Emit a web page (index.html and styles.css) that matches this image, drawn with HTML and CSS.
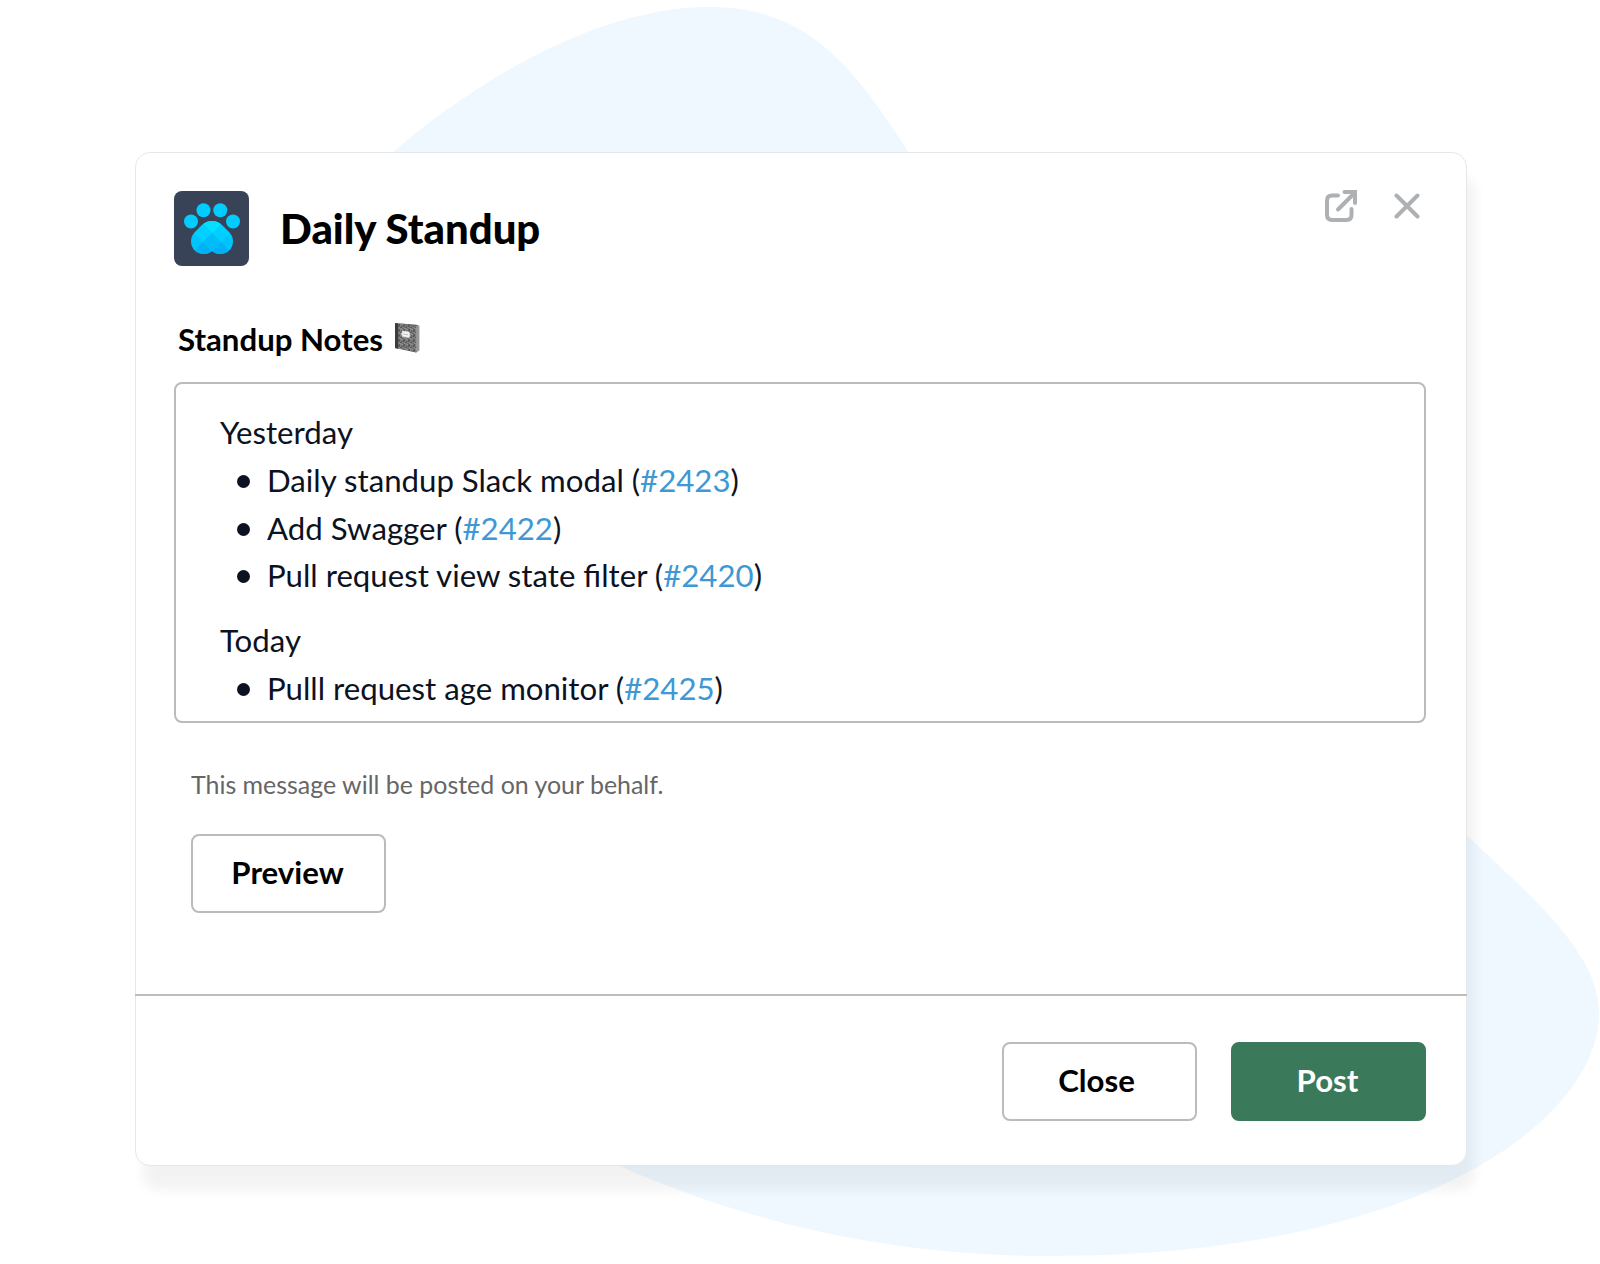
FILE: index.html
```html
<!DOCTYPE html>
<html lang="en">
<head>
  <meta charset="UTF-8">
  <meta name="viewport" content="width=device-width, initial-scale=1.0">
  <title>Daily Standup</title>
  <link rel="stylesheet" href="styles.css">
</head>
<body>
  <svg class="blob" viewBox="0 0 1600 1264" aria-hidden="true">
    <path d="M392 153 C455 98 585 7 709 7 C807 7 852 64 909 153 Z"/>
    <path d="M1467 835 C1526 893 1599 950 1599 1013 C1599 1120 1420 1256 1051 1256 C880 1256 735 1218 615 1164 L1300 1000 Z"/>
  </svg>

  <div class="modal">
    <header class="modal-header">
      <svg class="logo" viewBox="0 0 75 75">
        <defs>
          <clipPath id="pad">
            <path d="M38 30 C43 30 46.500 32 49 35 L55 41 C58 44 59 47 59 50.500 C59 58 53 63 46.500 63 C43 63 40 62 38 60 C36 62 33 63 29.500 63 C23 63 17 58 17 50.500 C17 47 18 44 21 41 L27 35 C29.500 32 33 30 38 30 Z"/>
          </clipPath>
        </defs>
        <rect width="75" height="75" rx="8" fill="#394358"/>
        <g fill="#00ccff">
          <circle cx="17" cy="30.500" r="7"/>
          <circle cx="29.500" cy="19.300" r="7"/>
          <circle cx="46.300" cy="19.300" r="7"/>
          <circle cx="59" cy="30.500" r="7"/>
        </g>
        <g clip-path="url(#pad)">
          <rect x="15" y="28" width="46" height="37" fill="#00c4fb"/>
          <path d="M38 24 L47 33 L38 42 L29 33 Z" fill="#00e1ff"/>
          <path d="M29 33 L38 42 L29 51 L20 42 Z M47 33 L56 42 L47 51 L38 42 Z" fill="#00d0ff"/>
          <path d="M29 51 L38 60 L29 69 L20 60 Z M47 51 L56 60 L47 69 L38 60 Z" fill="#00b2f3"/>
          <path d="M38 42 L47 51 L38 60 L29 51 Z" fill="#00bdf9"/>
        </g>
      </svg>
      <h1 class="title">Daily Standup</h1>
      <div class="actions">
        <svg class="icon-open" viewBox="0 0 32 32">
          <path d="M13 5.500 H7 Q2 5.500 2 10.500 V25 Q2 30 7 30 H21.500 Q26.500 30 26.500 25 V19"/>
          <path d="M13 19.500 L29 3.500"/>
          <path d="M19.500 2 H30 V13" stroke-linejoin="miter"/>
        </svg>
        <svg class="icon-close" viewBox="0 0 26 26">
          <path d="M2.500 2.500 L23.500 23.500 M23.500 2.500 L2.500 23.500"/>
        </svg>
      </div>
    </header>

    <main class="modal-body">
      <h2 class="label">
        Standup Notes
        <svg class="notebook" viewBox="0 0 26 31">
          <defs>
            <pattern id="marble" width="5" height="5" patternUnits="userSpaceOnUse">
              <rect width="5" height="5" fill="#6a6a6a"/>
              <path d="M0 1 H1 V2 H3 V3 H4 M1 4 H2 M4 0 V1" stroke="#9c9c9c" stroke-width="0.900" fill="none"/>
              <path d="M2 0 V1 M4 4 H5 M0 3 H1" stroke="#444" fill="none"/>
            </pattern>
          </defs>
          <path d="M1 1 L24 3 L25.500 4 V28.500 L22 30.500 L1 26 Z" fill="#aaa"/>
          <path d="M1 1 L22.500 4 V30.500 L1 26 Z" fill="url(#marble)"/>
          <path d="M1 1 L4 1.400 V26.700 L1 26 Z" fill="#3c3c3c"/>
          <path d="M1 1 L24 3 L22.500 4 Z" fill="#555"/>
          <path d="M25 4 V28.500 L22.500 30 V4" fill="#999"/>
          <path d="M8.500 9 L15 10 Q16.500 12.500 15 15.500 L8.500 14.500 Q7 12 8.500 9 Z" fill="#f5f5f5" stroke="#ddd" stroke-width="0.800"/>
          <path d="M9.500 12 L14 12.800" stroke="#aaa" stroke-width="0.800"/>
        </svg>
      </h2>

      <div class="notes">
        <p>Yesterday</p>
        <ul>
          <li>Daily standup Slack modal (<a>#2423</a>)</li>
          <li>Add Swagger (<a>#2422</a>)</li>
          <li>Pull request view state filter (<a>#2420</a>)</li>
        </ul>
        <p>Today</p>
        <ul>
          <li>Pulll request age monitor (<a>#2425</a>)</li>
        </ul>
      </div>

      <p class="hint">This message will be posted on your behalf.</p>
      <button class="btn btn-preview">Preview</button>
    </main>

    <footer class="modal-footer">
      <button class="btn btn-close">Close</button>
      <button class="btn btn-primary">Post</button>
    </footer>
  </div>
</body>
</html>
```

FILE: styles.css
```css
* {
  box-sizing: border-box;
}

body {
  margin: 0;
  height: 1264px;
  padding: 152px 133px 0 135px;
  overflow: hidden;
  background: #fff;
  color: #000;
  font-family: Lato, sans-serif;
}

h1, h2, p, ul {
  margin: 0;
  padding: 0;
}

/* background shapes */
.blob {
  position: absolute;
  top: 0;
  left: 0;
  width: 1600px;
  height: 1264px;
  fill: #f0f8ff;
}

.modal {
  position: relative;
  display: flex;
  flex-direction: column;
  height: 1014px;
  background: #fff;
  border: 1px solid #e5e8eb;
  border-radius: 15px;
  box-shadow: 8px 24px 12px rgba(0, 0, 0, 0.05);
}

.modal-header {
  display: flex;
  align-items: flex-start;
  padding: 38px 46px 0 38px;
}

.logo {
  width: 75px;
  height: 75px;
}

.title {
  margin-left: 31px;
  font-size: 41.9px;
  font-weight: 900;
  line-height: 75px;
}

.actions {
  display: flex;
  align-items: center;
  gap: 37px;
  margin: -1px 0 0 auto;
}

.actions svg {
  fill: none;
  stroke: #aeb1b4;
  stroke-width: 4;
  stroke-linecap: round;
  stroke-linejoin: round;
}

.icon-open {
  width: 32px;
  height: 32px;
}

.icon-close {
  width: 26px;
  height: 26px;
}

.modal-body {
  flex: 1;
  padding: 49px 40px 0 38px;
}

.label {
  display: flex;
  align-items: center;
  gap: 11px;
  height: 48px;
  margin-left: 4px;
  font-size: 31.2px;
  font-weight: 700;
}

.notebook {
  width: 26px;
  height: 31px;
  margin-top: -3px;
}

.notes {
  height: 341px;
  margin-top: 19px;
  padding: 25px 44px;
  border: 2px solid #bbb;
  border-radius: 8px;
  color: #0c1222;
  font-size: 31.2px;
  line-height: 47.8px;
}

.notes ul {
  padding-left: 47px;
  list-style: none;
}

.notes ul + p {
  margin-top: 17px;
}

.notes li::before {
  content: "";
  float: left;
  width: 13px;
  height: 13px;
  margin: 18px 0 0 -30px;
  border-radius: 50%;
  background: #0c1222;
}

.notes a {
  color: #3d98d3;
}

.hint {
  margin: 41px 0 0 17px;
  color: #666;
  font-size: 24.95px;
  line-height: 40px;
}

.btn {
  width: 195px;
  height: 79px;
  padding: 0 2px 4px 0;
  border: 2px solid #bbb;
  border-radius: 8px;
  background: #fff;
  color: #000;
  font-family: inherit;
  font-size: 31.2px;
  font-weight: 700;
}

.btn-preview {
  margin: 30px 0 0 17px;
}

.btn-close {
  padding-right: 6px;
}

.btn-primary {
  border-color: #3b795b;
  background: #3b795b;
  color: #fff;
}

.modal-footer {
  display: flex;
  justify-content: flex-end;
  gap: 34px;
  height: 171px;
  margin: 0 -1px;
  padding: 46px 41px 0;
  border-top: 2px solid #bdbdbd;
}
```
